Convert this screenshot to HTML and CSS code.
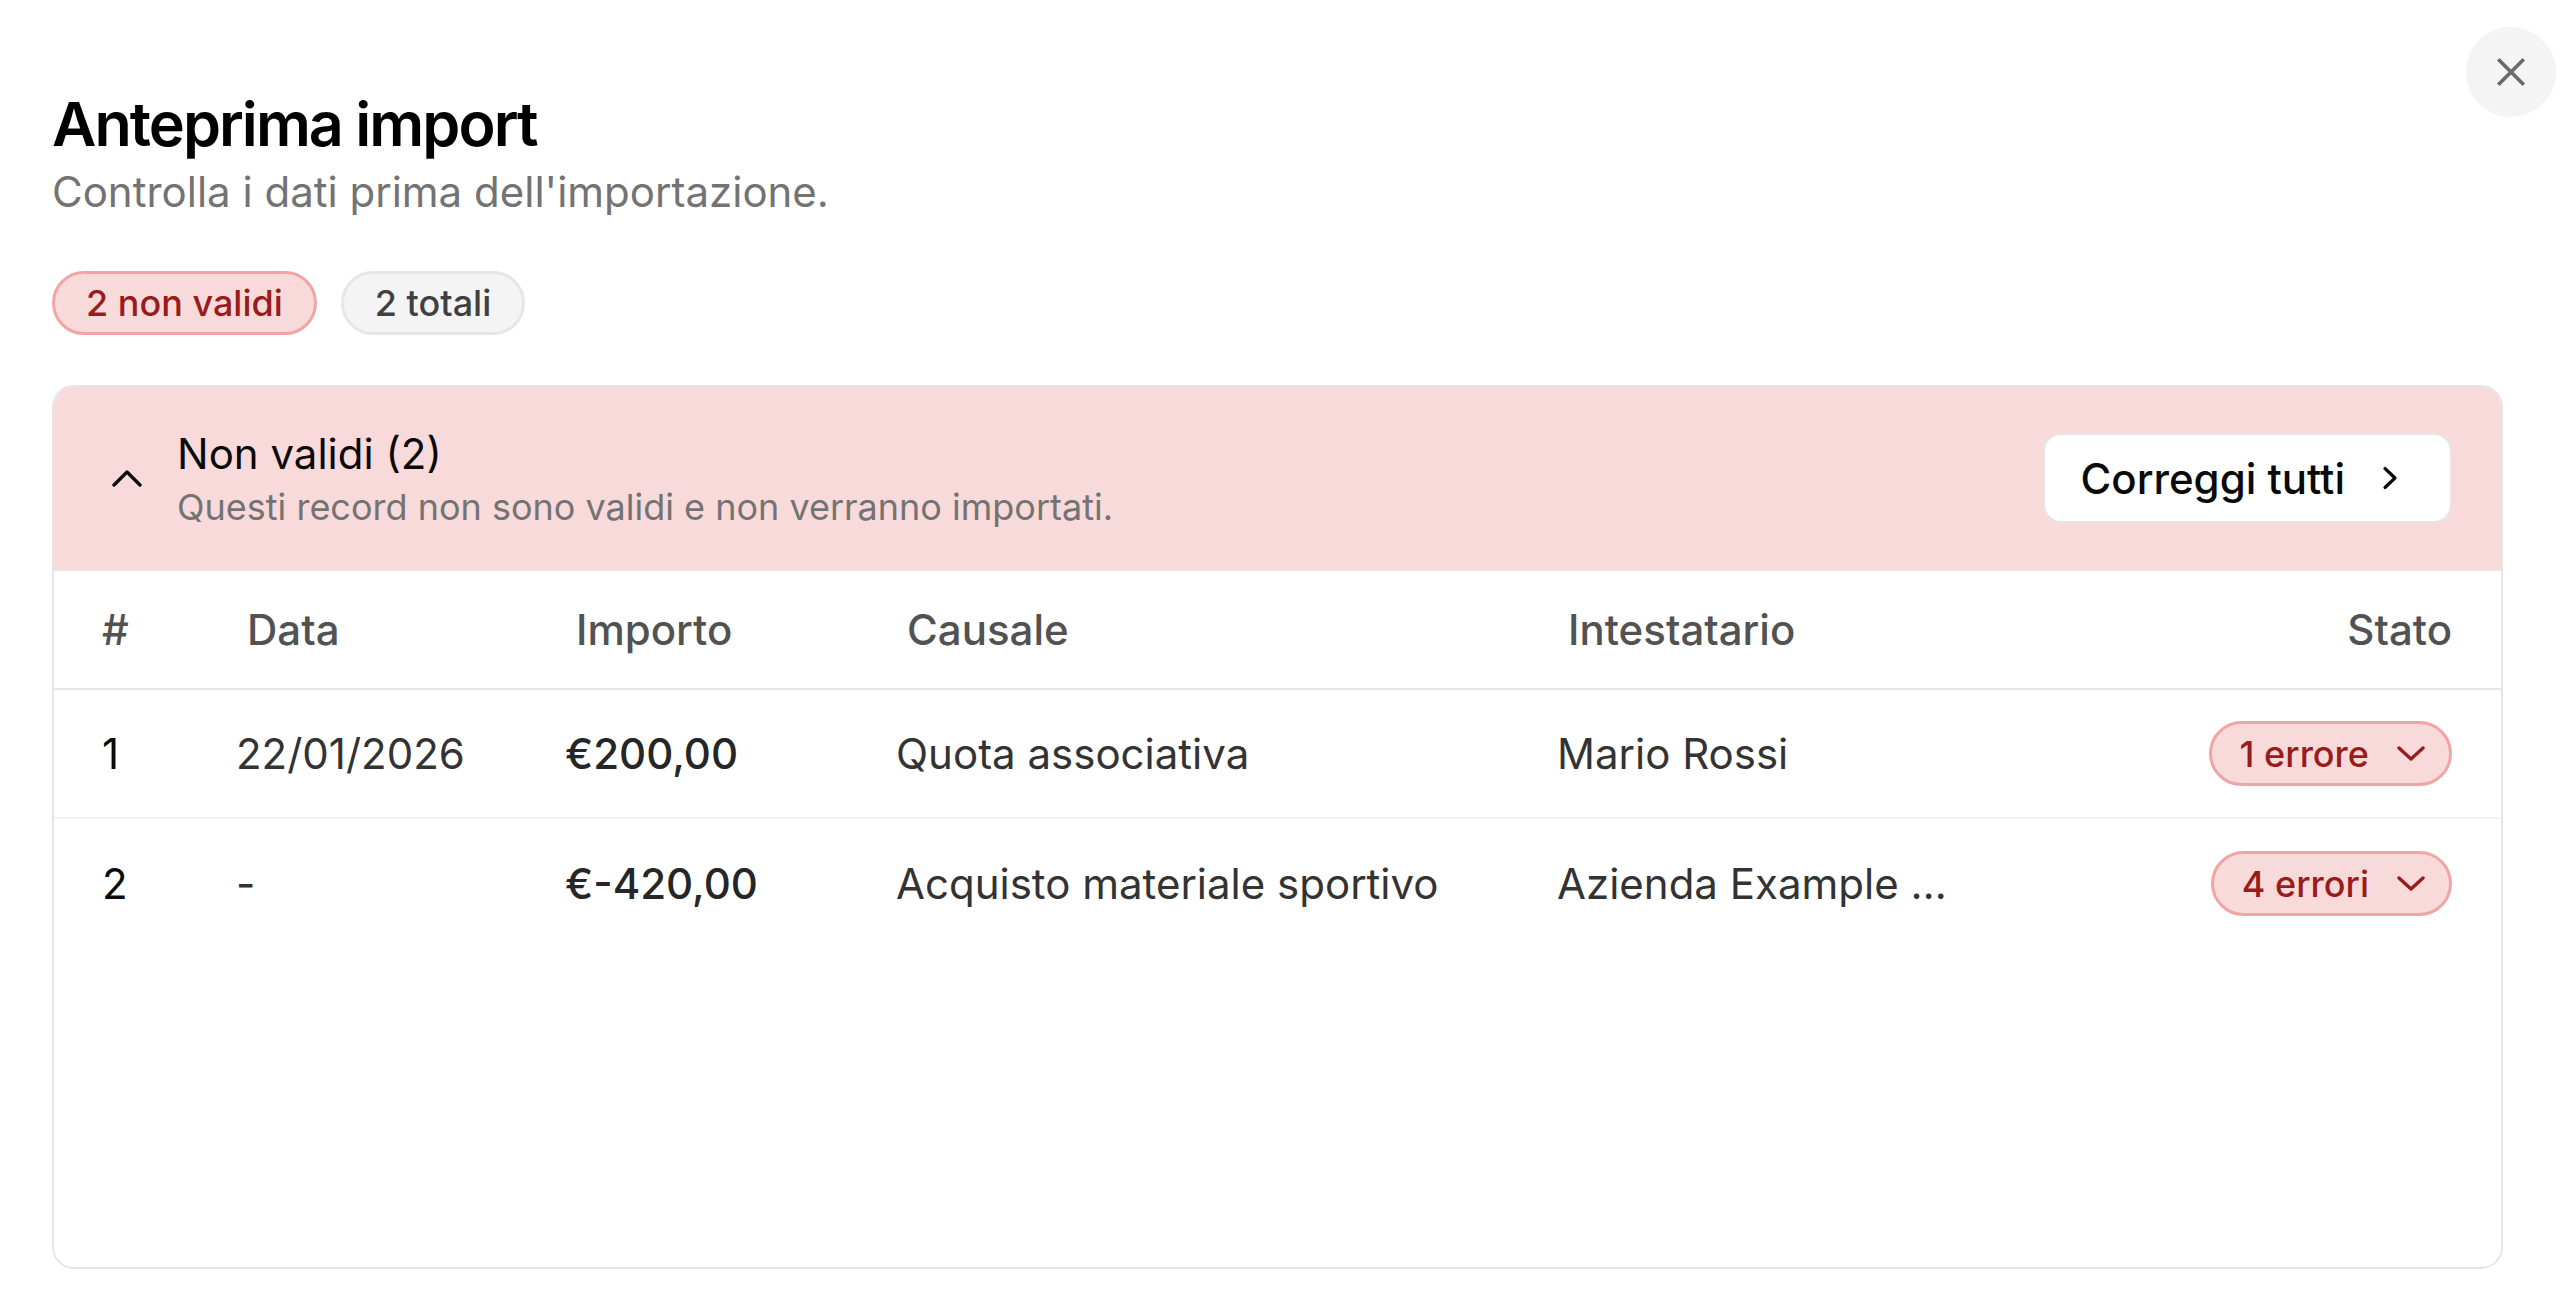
FILE: index.html
```
<!DOCTYPE html>
<html lang="it">
<head>
<meta charset="utf-8">
<title>Anteprima import</title>
<link rel="stylesheet" href="styles.css">
</head>
<body>
<div class="dialog">
  <button class="close" aria-label="Chiudi">
    <svg viewBox="0 0 24 24" width="46" height="46" fill="none" stroke="currentColor" stroke-width="1.9" stroke-linecap="square"><path d="M18 6 6 18M6 6l12 12"/></svg>
  </button>
  <h1 class="title">Anteprima import</h1>
  <p class="subtitle">Controlla i dati prima dell'importazione.</p>
  <div class="badges">
    <span class="badge badge-error">2 non validi</span>
    <span class="badge badge-neutral">2 totali</span>
  </div>
  <section class="card">
    <div class="card-header">
      <svg class="chev-up" viewBox="0 0 30 17" width="30" height="17" fill="none" stroke="currentColor" stroke-width="3.3" stroke-linecap="round" stroke-linejoin="round"><path d="M2 15 15 2l13 13"/></svg>
      <div class="group-text">
        <div class="group-title">Non validi (2)</div>
        <div class="group-desc">Questi record non sono validi e non verranno importati.</div>
      </div>
      <button class="fix-all">Correggi tutti
        <svg viewBox="0 0 16 24" width="16" height="24" fill="none" stroke="currentColor" stroke-width="3.2" stroke-linecap="round" stroke-linejoin="round"><path d="M3 2.5l10 9.5-10 9.5"/></svg>
      </button>
    </div>
    <div class="table">
      <div class="row head">
        <div class="cell num">#</div>
        <div class="cell">Data</div>
        <div class="cell">Importo</div>
        <div class="cell">Causale</div>
        <div class="cell">Intestatario</div>
        <div class="cell status">Stato</div>
      </div>
      <div class="row">
        <div class="cell num">1</div>
        <div class="cell">22/01/2026</div>
        <div class="cell amount">€200,00</div>
        <div class="cell">Quota associativa</div>
        <div class="cell">Mario Rossi</div>
        <div class="cell status"><span class="err-pill">1 errore <svg viewBox="0 0 28 15" width="28" height="15" fill="none" stroke="currentColor" stroke-width="3.4" stroke-linecap="round" stroke-linejoin="round"><path d="M2 2l12 11 12-11"/></svg></span></div>
      </div>
      <div class="row">
        <div class="cell num">2</div>
        <div class="cell">-</div>
        <div class="cell amount">€-420,00</div>
        <div class="cell">Acquisto materiale sportivo</div>
        <div class="cell">Azienda Example …</div>
        <div class="cell status"><span class="err-pill">4 errori <svg viewBox="0 0 28 15" width="28" height="15" fill="none" stroke="currentColor" stroke-width="3.4" stroke-linecap="round" stroke-linejoin="round"><path d="M2 2l12 11 12-11"/></svg></span></div>
      </div>
    </div>
  </section>
</div>
</body>
</html>
```
FILE: styles.css
```
* { box-sizing: border-box; }
html, body { margin: 0; padding: 0; background: #ffffff; }
body {
  font-family: Inter, "Liberation Sans", sans-serif;
  color: #0a0a0a;
}
.dialog {
  position: relative;
  padding: 85px 69px 0 52px;
}
.close {
  position: absolute;
  top: 27px;
  right: 16px;
  width: 90px;
  height: 90px;
  border: 0;
  border-radius: 50%;
  background: #f4f4f4;
  color: #6b6b6b;
  display: flex;
  align-items: center;
  justify-content: center;
  padding: 0;
}
.title {
  margin: 0;
  font-size: 61px;
  line-height: 78px;
  font-weight: 600;
  letter-spacing: -0.032em;
  color: #000;
}
.subtitle {
  margin: 3px 0 0;
  font-size: 42px;
  line-height: 52px;
  color: #737373;
}
.badges {
  display: flex;
  gap: 24px;
  margin-top: 53px;
}
.badge {
  display: inline-flex;
  align-items: center;
  height: 64px;
  padding: 0 31px;
  border-radius: 32px;
  border: 3px solid;
  font-size: 36px;
  font-weight: 500;
}
.badge-error { background: #f9dada; border-color: #efa5a5; color: #991b1b; }
.badge-neutral { background: #f4f4f4; border-color: #e6e6e6; color: #404040; }
.card {
  margin-top: 50px;
  height: 884px;
  border: 2px solid #e5e5e5;
  border-radius: 22px;
  overflow: hidden;
}
.card-header {
  display: flex;
  align-items: center;
  min-height: 184px;
  padding: 0 49px 0 58px;
  background: #f9dada;
  border-bottom: 2px solid #e5e5e5;
}
.chev-up { color: #0a0a0a; flex: none; margin-right: 35px; }
.group-text { flex: 1; }
.group-title { font-size: 42px; line-height: 52px; color: #0a0a0a; }
.group-desc { margin-top: 5px; font-size: 36px; line-height: 44px; color: #737373; }
.fix-all {
  display: flex;
  align-items: center;
  gap: 37px;
  height: 90px;
  padding: 0 52px 0 36px;
  background: #ffffff;
  border: 2px solid #e5e5e5;
  border-radius: 18px;
  font-family: inherit;
  font-size: 42px;
  font-weight: 500;
  color: #0a0a0a;
}
.row {
  display: grid;
  grid-template-columns: 134px 329px 331px 661px 1fr auto;
  align-items: center;
  height: 129px;
  padding: 0 49px 0 48px;
  border-bottom: 2px solid #f2f2f2;
  font-size: 42px;
  color: #333333;
}
.row:last-child { border-bottom: 0; }
.row.head {
  height: 119px;
  border-bottom-color: #e5e5e5;
  font-weight: 500;
  color: #525252;
}
.row.head .cell { padding-left: 11px; }
.row.head .cell.num, .row.head .cell.status { padding-left: 0; }
.cell.num { color: #0a0a0a; }
.row.head .cell.num { color: #525252; }
.cell.amount { font-weight: 500; color: #262626; }
.cell.status { justify-self: end; }
.err-pill {
  display: inline-flex;
  align-items: center;
  gap: 28px;
  height: 65px;
  padding: 0 24px 0 28px;
  border: 3px solid #efa5a5;
  border-radius: 33px;
  background: #f9dada;
  color: #991b1b;
  font-size: 36px;
  font-weight: 500;
}
```
